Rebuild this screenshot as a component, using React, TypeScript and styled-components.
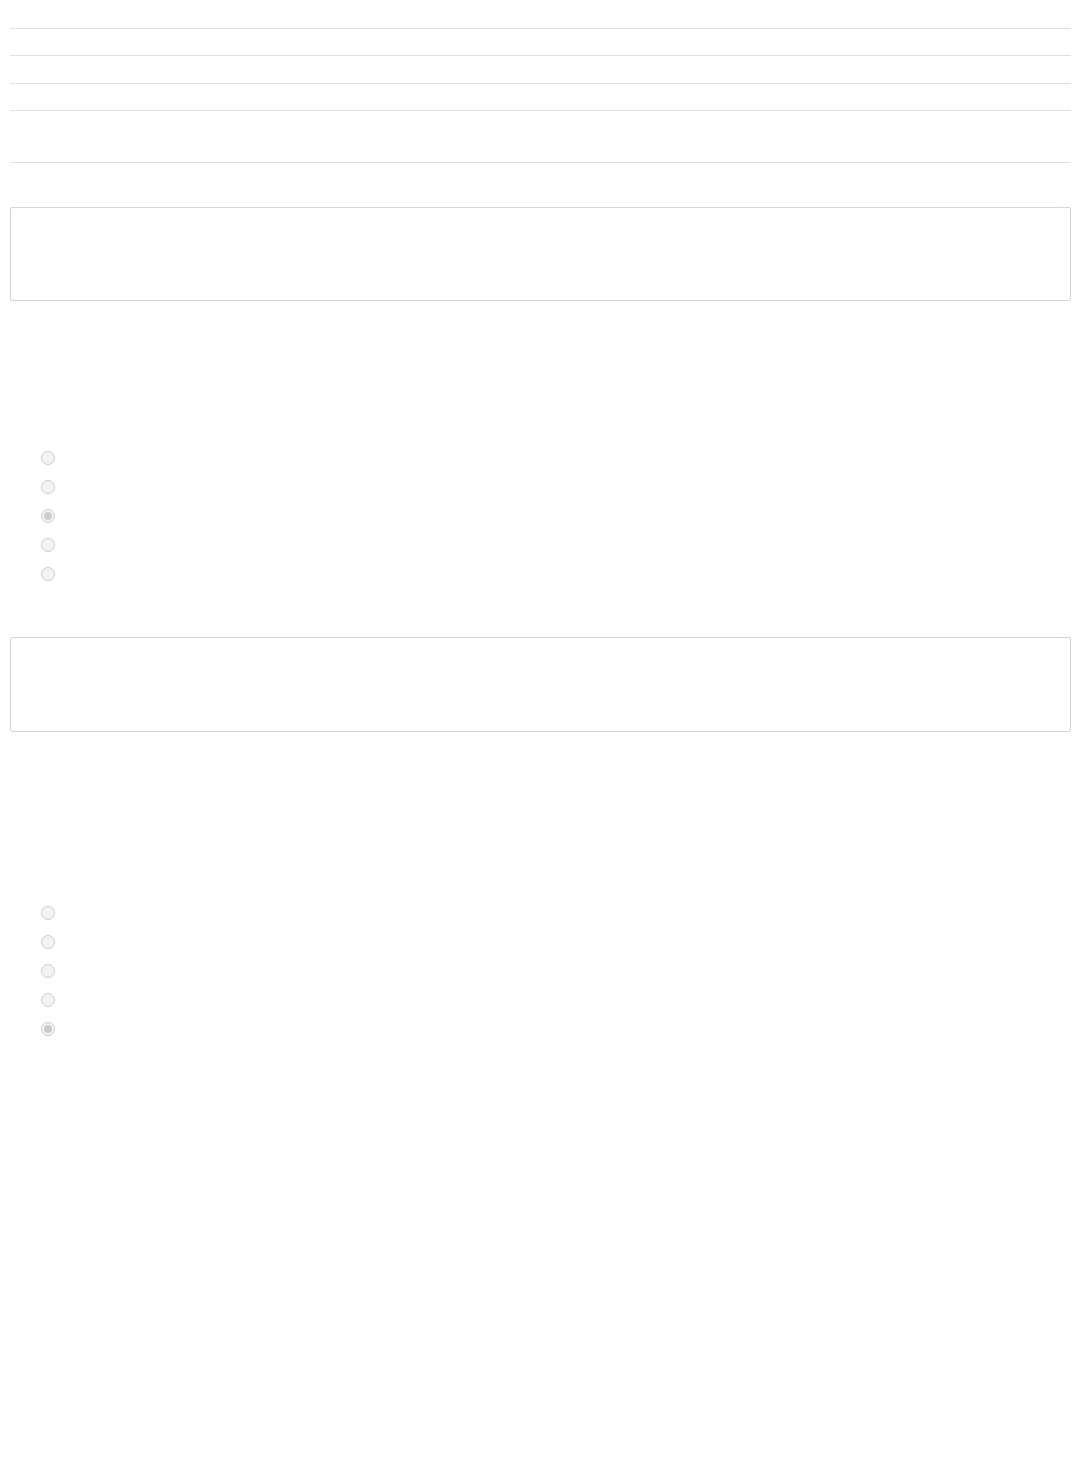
import styled, { createGlobalStyle } from "styled-components";

const GlobalStyle = createGlobalStyle`
  html, body {
    margin: 0;
    padding: 0;
    background: #ffffff;
    font-family: "Liberation Sans", Arial, sans-serif;
  }
`;

const rowHeights = [28, 26, 27, 26, 51];

const firstChoices = ["", "", "", "", ""];
const secondChoices = ["", "", "", "", ""];

const App = () => {
  return (
    <Page>
      <GlobalStyle />
      <Table>
        {rowHeights.map((h, i) => (
          <TableRow key={i} height={h} />
        ))}
      </Table>
      <Panel $top={44} $height={94} />
      <ChoiceList $top={142}>
        {firstChoices.map((label, i) => (
          <Choice key={i}>
            <Radio type="radio" name="first" disabled checked={i === 2} readOnly />
            <ChoiceLabel>{label}</ChoiceLabel>
          </Choice>
        ))}
      </ChoiceList>
      <Panel $top={49} $height={95} />
      <ChoiceList $top={166}>
        {secondChoices.map((label, i) => (
          <Choice key={i}>
            <Radio type="radio" name="second" disabled checked={i === 4} readOnly />
            <ChoiceLabel>{label}</ChoiceLabel>
          </Choice>
        ))}
      </ChoiceList>
    </Page>
  );
};

export default App;

const Page = styled.div`
  width: 1061px;
  padding: 0 8px 0 10px;
  min-height: 1480px;
  box-sizing: content-box;
`;

const Table = styled.div`
  display: flex;
  flex-direction: column;
`;

const TableRow = styled.div<{ height: number }>`
  height: ${(props) => props.height}px;
  border-bottom: 1px solid #dedfe3;
`;

const Panel = styled.div<{ $top: number; $height: number }>`
  margin-top: ${(props) => props.$top}px;
  height: ${(props) => props.$height}px;
  box-sizing: border-box;
  border: 1px solid #cfd4dd;
  border-radius: 2px;
  background: #ffffff;
`;

const ChoiceList = styled.div<{ $top: number }>`
  margin-top: ${(props) => props.$top}px;
  padding-left: 31px;
  display: flex;
  flex-direction: column;
`;

const Choice = styled.label`
  height: 29px;
  display: flex;
  align-items: center;
  gap: 8px;
`;

const Radio = styled.input`
  appearance: none;
  margin: 0;
  width: 14px;
  height: 14px;
  border-radius: 50%;
  border: 1px solid #cdcdcd;
  background: #f3f3f3;
  box-sizing: border-box;
  display: grid;
  place-items: center;
  &:checked::after {
    content: "";
    width: 8px;
    height: 8px;
    border-radius: 50%;
    background: #cccccc;
  }
`;

const ChoiceLabel = styled.span`
  font-size: 14px;
  color: #ffffff;
`;
